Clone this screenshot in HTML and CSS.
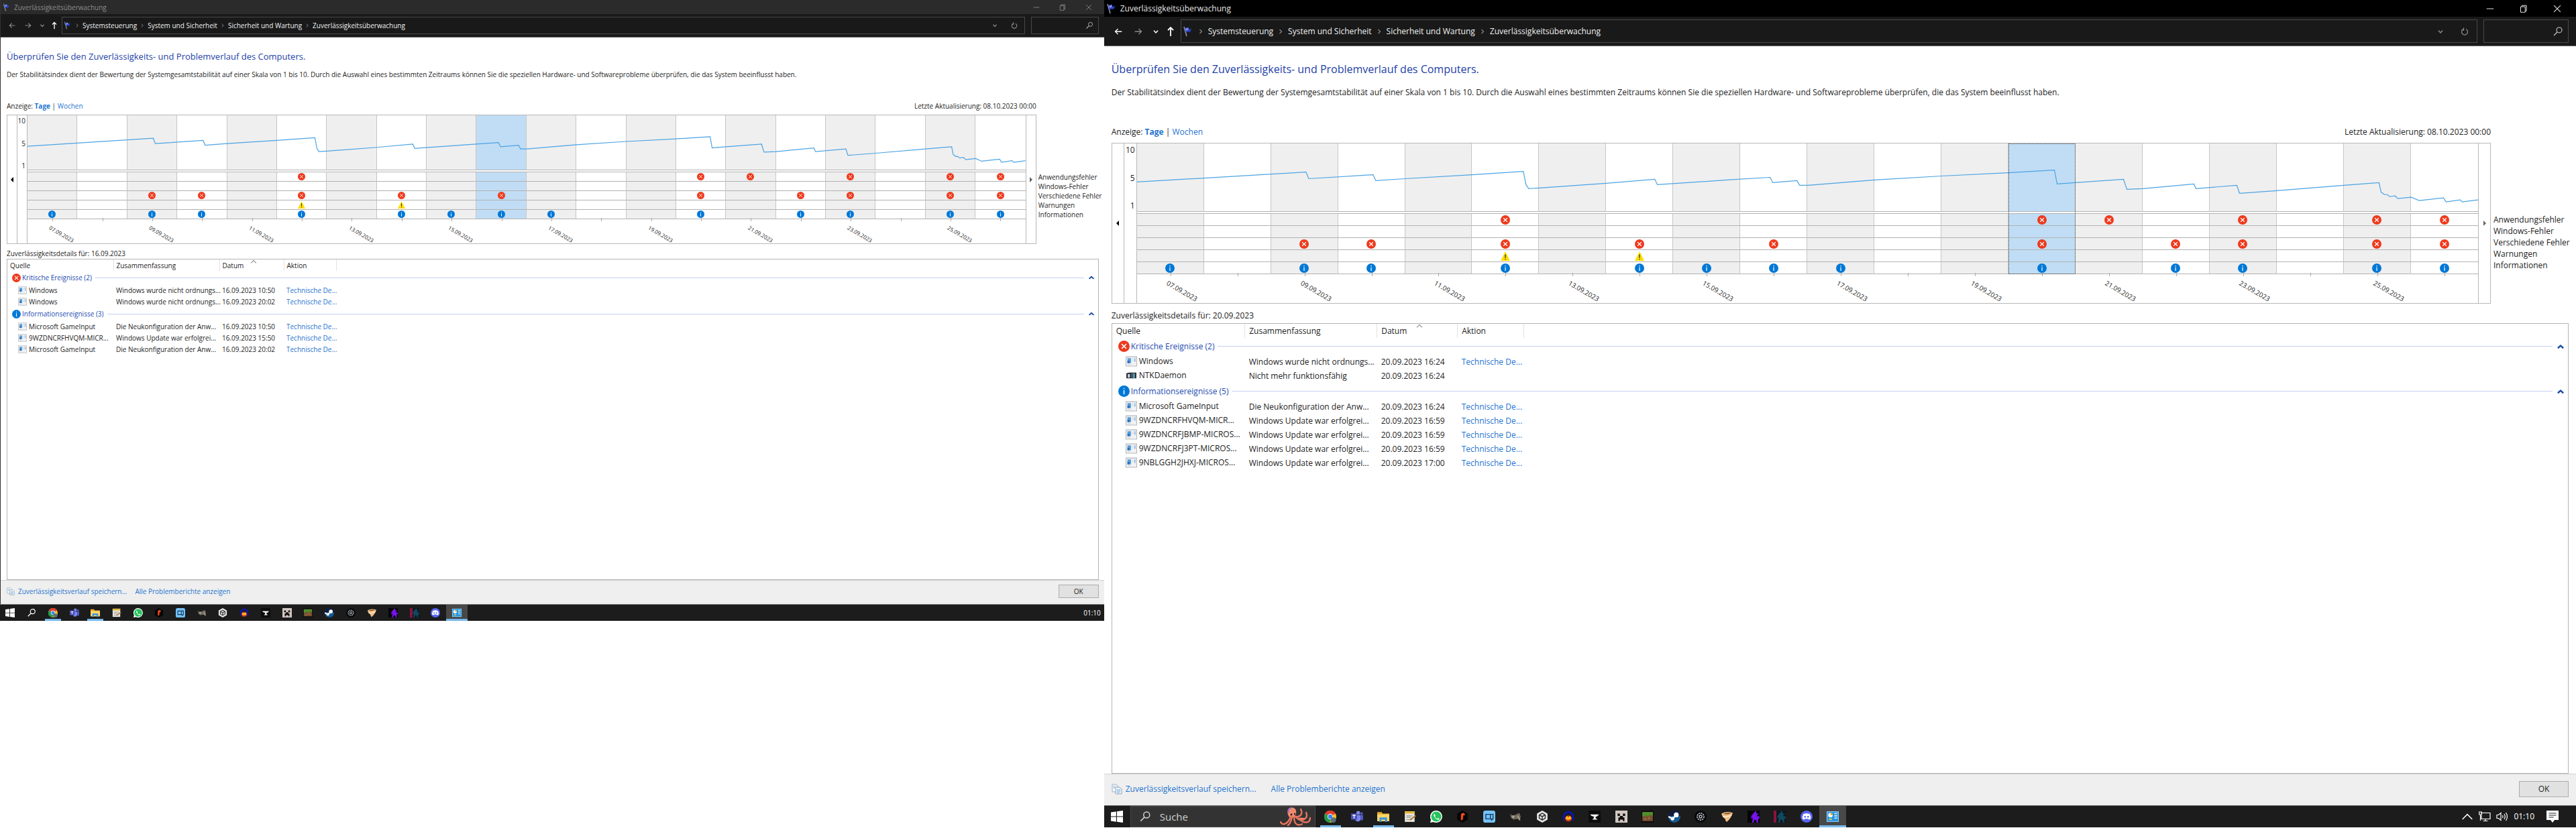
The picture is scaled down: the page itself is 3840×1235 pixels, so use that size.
FILE: index.html
```html
<!DOCTYPE html>
<html lang="de">
<head>
<meta charset="utf-8">
<meta name="viewport" content="width=device-width, initial-scale=1">
<title>Zuverlässigkeitsüberwachung</title>
<link rel="stylesheet" href="styles.css">
</head>
<body>
<svg class="sprite" aria-hidden="true">
  <symbol id="flag" viewBox="0 0 16 16"><path d="M2 1l4 14" stroke="#9aa0a8" stroke-width="1.4"/><path d="M3 2q3 2 5-1l1 4 5-1q-3 2-3 5-3-2-6 1z" fill="#2c43c8"/><path d="M4 3q3 1 4-1l1 3-4 2z" fill="#7f93f2"/></symbol>
  <symbol id="back" viewBox="0 0 16 16"><path d="M15 8H2M7.500 2.500L2 8l5.500 5.500" fill="none" stroke="currentColor" stroke-width="1.800"/></symbol>
  <symbol id="fwd" viewBox="0 0 16 16"><path d="M1 8h13M8.500 2.500L14 8l-5.500 5.500" fill="none" stroke="currentColor" stroke-width="1.800"/></symbol>
  <symbol id="up" viewBox="0 0 16 16"><path d="M8 15V2M4 6l4-4 4 4" fill="none" stroke="currentColor" stroke-width="1.800"/></symbol>
  <symbol id="down" viewBox="0 0 16 16"><path d="M4 6L8 10.500 12 6" fill="none" stroke="currentColor" stroke-width="2"/></symbol>
  <symbol id="sep" viewBox="0 0 16 16"><path d="M6 4L10 8 6 12" fill="none" stroke="currentColor" stroke-width="1.500"/></symbol>
  <symbol id="reload" viewBox="0 0 16 16"><path d="M11 3.500A6 6 0 1 1 5 3.500M6 .5v4.500H2" fill="none" stroke="currentColor" stroke-width="1.700"/></symbol>
  <symbol id="lens" viewBox="0 0 16 16"><circle cx="10" cy="5.800" r="4" fill="none" stroke="currentColor" stroke-width="1.300"/><path d="M7.300 8.600L2 14" stroke="currentColor" stroke-width="1.500"/></symbol>
  <symbol id="min" viewBox="0 0 16 16"><path d="M1 8h14" stroke="currentColor" stroke-width="1.300"/></symbol>
  <symbol id="max" viewBox="0 0 16 16"><path d="M2 4h9v11H2zM4.500 4V1.500h9v11H11" fill="none" stroke="currentColor" stroke-width="1.300"/></symbol>
  <symbol id="close" viewBox="0 0 16 16"><path d="M1.500 1.500l13 13M14.500 1.500l-13 13" stroke="currentColor" stroke-width="1.400"/></symbol>
  <symbol id="err" viewBox="0 0 16 16"><circle cx="8" cy="8" r="8" fill="#ee3a1d"/><path d="M4.800 4.800l6.400 6.400M11.200 4.800l-6.400 6.400" stroke="#fff" stroke-width="1.400"/></symbol>
  <symbol id="info" viewBox="0 0 16 16"><circle cx="8" cy="8" r="8" fill="#0078d7"/><path d="M8 6.500V12.500M8 3.500V5" stroke="#fff" stroke-width="1.400"/></symbol>
  <symbol id="warn" viewBox="0 0 16 16"><path d="M8 0l8 16H0z" fill="#ffde00"/><path d="M8 5v6M8 12.500v1.500" stroke="#222" stroke-width="1.400"/></symbol>
  <symbol id="app" viewBox="0 0 16 14"><path d="M.5.500h15v13H.5z" fill="#f1f2f4" stroke="#b4b8bd"/><path d="M2.500 2.500h5v7h-5z" fill="#5a9ed8"/><path d="M2.500 6h3v3.500h-3z" fill="#2f6fb4"/><path d="M12 2.500h2v5h-2z" fill="#9cc3e6"/><path d="M9 4h2M9 6h2M3 11.500h4" stroke="#ccd0d6"/></symbol>
  <symbol id="ntk" viewBox="0 0 16 14"><path d="M1 4l4-1v8l-4 0zM5 3h10v8H5z" fill="#20282e"/><path d="M3 5h3v5H3z" fill="#cfd6da"/><path d="M8 4h1v6H8zM10 4h3v7h-3z" fill="#5f98ad"/></symbol>
  <symbol id="fold" viewBox="0 0 16 16"><path d="M2.500 11L8 6l5.500 5" fill="none" stroke="#1a4aa8" stroke-width="3.200"/></symbol>
  <symbol id="copy" viewBox="0 0 16 16"><path d="M1 1h6l2 2v9H1z" fill="#f6f9fc" stroke="#9fb0c0"/><path d="M6 5h6l3 3v7H6z" fill="#e8f2fb" stroke="#8fa5ba"/><path d="M8 9h5M8 11h5M8 13h4M2.500 4h3M2.500 6h3" stroke="#7fb0dc"/></symbol>
  <symbol id="trend" viewBox="0 0 2000 103" preserveAspectRatio="none"><polyline vector-effect="non-scaling-stroke" fill="none" stroke="#4ba3e3" stroke-width="1.200" points="0,58 252,43 256,53 352,47 356,56 400,53 500,47 576,42 580,62 584,68 600,67 700,60 772,54 776,62 880,55 944,51 948,59 984,56 988,63 1001,63 1100,55 1200,49 1300,44 1368,40 1372,61 1400,59 1471,54 1476,69 1500,68 1576,61 1579,68 1640,63 1644,75 1700,71 1800,63 1852,59 1855,73 1860,77 1864,77 1868,80 1876,79 1880,83 1900,81 1912,86 1948,82 1952,88 1973,85 1976,88 2000,85"/></symbol>

  <symbol id="win" viewBox="0 0 16 16"><path d="M0 2.300L7 1.300V7.600H0zM8 1.200L16 0v7.600H8zM0 8.500h7v6.300l-7-1zM8 8.500h8V16l-8-1.100z" fill="#fff"/></symbol>
  <symbol id="chrome" viewBox="0 0 16 16"><circle cx="8" cy="8" r="8" fill="#fbc116"/><path d="M1 4A8 8 0 0 1 15 4L8 8z" fill="#e33b2e"/><path d="M1 4a8 8 0 0 0 6 12l4-7-3-1z" fill="#229a4b"/><circle cx="8" cy="8" r="3.700" fill="#fff"/><circle cx="8" cy="8" r="2.900" fill="#3f82f0"/><circle cx="12" cy="12.500" r="3.500" fill="#5b6f7e"/></symbol>
  <symbol id="teams" viewBox="0 0 16 16"><circle cx="9.500" cy="3" r="2.500" fill="#7b83eb"/><circle cx="14" cy="4" r="1.700" fill="#5059c9"/><path d="M6 6h7v5a4 4 0 0 1-7 2z" fill="#7b83eb"/><path d="M13 6h3v5a2.500 2.500 0 0 1-3 2z" fill="#5059c9"/><path d="M0 4h8v8H0z" fill="#4b53bc"/><path d="M2 6.200h4M4 6.200V10.500" stroke="#fff" stroke-width="1.200"/></symbol>
  <symbol id="folder" viewBox="0 0 16 16"><path d="M0 2h6l1 2h9v10H0z" fill="#e9a829"/><path d="M0 5h16v9H0z" fill="#ffd766"/><path d="M3 9h10v6h-2.500v-3h-5v3H3z" fill="#3b95dd"/></symbol>
  <symbol id="notes" viewBox="0 0 16 16"><path d="M1 1h13v14H1z" fill="#e8e6df"/><path d="M1 1h13v3H1z" fill="#e3b93a"/><path d="M3 7h8M3 9h6M3 12h8" stroke="#9a9a98"/><path d="M7 12l8-6 1 1.500-8 5.500z" fill="#a87432"/></symbol>
  <symbol id="whatsapp" viewBox="0 0 16 16"><path d="M8 0a8 8 0 1 1-4 15L0 16l1-4A8 8 0 0 1 8 0z" fill="#fff"/><circle cx="8" cy="8" r="6.700" fill="#25c45c"/><path d="M5.500 4.200c-1.600 1-.6 4 1.400 6s5 2.700 5.300.8l-2-1.200-1 1c-1.600-.6-2.500-1.700-3-3l.9-1z" fill="#fff"/></symbol>
  <symbol id="hexf" viewBox="0 0 16 16"><path d="M8 0l7 4v8l-7 4-7-4V4z" fill="#050505"/><path d="M6 13V6q0-3 3.500-3Q12 4 11 6.500 9 5.500 9 8l-.500 4z" fill="#f04a18"/></symbol>
  <symbol id="dupe" viewBox="0 0 16 16"><rect width="16" height="16" rx="3" fill="#74c2f8"/><path d="M3.500 5h6v6h-6zM8 5h5v6l-2 1.500V11H8" fill="none" stroke="#173a5c" stroke-width="1.200"/></symbol>
  <symbol id="gimp" viewBox="0 0 16 16"><path d="M1 4l3 3 5-2 4-2 2 5-1 4-4-1-5 1-3-3z" fill="#716a5d"/><path d="M4 6l3 1-1 3-3-1z" fill="#a8a59d"/><path d="M11 7l3 6" stroke="#b5a58e" stroke-width="1.400"/></symbol>
  <symbol id="cube" viewBox="0 0 16 16"><path d="M8 0l7 4v8l-7 4-7-4V4z" fill="#e7e7e7"/><path d="M8 3.500L12 6v4l-4 2.500L4 10V6zM8 8v4M8 8L4.500 6M8 8l3.500-2" fill="none" stroke="#333" stroke-width="1.300"/></symbol>
  <symbol id="audacity" viewBox="0 0 16 16"><path d="M2 13V8a6 6 0 0 1 12 0v5" fill="none" stroke="#0a16c8" stroke-width="2.200"/><ellipse cx="8" cy="10.500" rx="4.500" ry="4" fill="#e0380f"/><path d="M4 10l2-3 2 2 2-2 2 3-2 2H6z" fill="#ffc21c"/></symbol>
  <symbol id="anvil" viewBox="0 0 16 16"><path d="M0 0h16v16H0z" fill="#0c0c0c"/><path d="M2 5h12l-3 3H9.500v2L12 12H5l2-2V8L4 7z" fill="#f4f4f4"/></symbol>
  <symbol id="creeper" viewBox="0 0 16 16"><path d="M0 0h16v16H0z" fill="#d3c7c2"/><path d="M3 4h3v3H3zM10 4h3v3h-3zM6 7h4v2h2v5h-2v-2H6v2H4V9h2z" fill="#0d0d0d"/></symbol>
  <symbol id="grass" viewBox="0 0 16 16"><path d="M0 0h16v16H0z" fill="#0b0b0b"/><path d="M1 2h14v12H1z" fill="#7a5030"/><path d="M1 2h14v4l-2 1-2-2-2 3-3-2-2 2-3-1z" fill="#4f8f2c"/><path d="M4 10h2v2H4zM9 9h2v2H9z" fill="#a2764c"/></symbol>
  <symbol id="steam" viewBox="0 0 16 16"><circle cx="8" cy="8" r="8" fill="#155a94"/><path d="M0 7a8 8 0 0 1 16 0z" fill="#101b40"/><circle cx="10.500" cy="5.700" r="3.200" fill="#fff"/><circle cx="5.500" cy="10.700" r="2.300" fill="#fff"/><path d="M0 8l6 3 3-4" fill="none" stroke="#fff" stroke-width="2"/></symbol>
  <symbol id="bloom" viewBox="0 0 16 16"><circle cx="8" cy="8" r="8" fill="#06070a"/><circle cx="8" cy="8" r="4.500" fill="none" stroke="#bfc3c8" stroke-width="1.500" stroke-dasharray="2 1"/><circle cx="8" cy="8" r="1.800" fill="none" stroke="#bfc3c8" stroke-width="1.200"/></symbol>
  <symbol id="cone" viewBox="0 0 16 16"><path d="M1 4q6-4 15-1-2 7-8 12-2-1-2-4-4-2-5-7z" fill="#efc089"/><path d="M3 4.500q6-2.500 11-1-5 2-11 1z" fill="#7b4a22"/><path d="M3 8q7 1 11-2" stroke="#fff0d8" stroke-width="1.300" fill="none"/></symbol>
  <symbol id="bird" viewBox="0 0 16 16"><path d="M11 0L5 7v4l2-2-1 7h2l1-4 3 1v3h2v-4l2-3V8l-4-1 3-3-3 0z"/></symbol>
  <symbol id="discord" viewBox="0 0 16 16"><circle cx="8" cy="8" r="8" fill="#5865f2"/><path d="M4 4.500q4-1.500 8 0 2 3 1.500 6.500l-2.500 1-1-1.200H6L5 12l-2.500-1Q2 7.500 4 4.500z" fill="#fff"/><circle cx="6" cy="8.200" r="1.200" fill="#5865f2"/><circle cx="10" cy="8.200" r="1.200" fill="#5865f2"/></symbol>
  <symbol id="panel" viewBox="0 0 16 16"><path d="M0 1h16v14H0z" fill="#8fd3fb"/><path d="M1 2h14v12H1z" fill="#1f93e0"/><circle cx="5" cy="6" r="3" fill="#fff"/><path d="M5 6V3a3 3 0 0 1 3 3z" fill="#f6a51b"/><path d="M10 4h4M10 7h4M10 10h4" stroke="#d9f0ff" stroke-width="1.400"/><path d="M3 11.500h4" stroke="#ffd24a" stroke-width="1.600"/></symbol>
  <symbol id="octopus" viewBox="0 0 46 28"><path d="M14 15Q8 6 15 1q7-2 9 4 1 5-2 8 6 1 9 6 5 1 7-3" fill="#f08a6c"/><path d="M16 14q-3 9-9 11-4 1-6-3M18 15q-2 9-6 12M21 15q0 9 5 11 5 1 7-1M23 14q7 8 13 4 6-3 3-10M22 14q8 1 10-4 1-4-1-7M28 17q6 7 14 5 3-2 3-6" fill="none" stroke="#e6745f" stroke-width="2.400" stroke-linecap="round"/><path d="M13 8Q11 2 17 1" stroke="#9a6fd0" stroke-width="2" fill="none"/><circle cx="17" cy="11" r="1.400" fill="#2d1830"/><circle cx="22" cy="10" r="1.200" fill="#2d1830"/></symbol>
  <symbol id="chev" viewBox="0 0 16 16"><path d="M1.500 11.500L8 5l6.500 6.500" fill="none" stroke="currentColor" stroke-width="1.300"/></symbol>
  <symbol id="net" viewBox="0 0 18 16"><path d="M3 2.500h14v9H4V6M10 12v2.500M6.500 14.500h7M.8 1h3.500v4H.8zM2.500 5v9" fill="none" stroke="currentColor" stroke-width="1.200"/></symbol>
  <symbol id="sound" viewBox="0 0 18 16"><path d="M1 5.500h2.500L7 2.500v11L3.500 10.500H1zM9.500 6q1 2 0 4M12 4q2.500 4 0 8M14.500 2q4 6 0 12" fill="none" stroke="currentColor" stroke-width="1.200"/></symbol>
  <symbol id="notif" viewBox="0 0 18 18"><path d="M0 0h18v14h-6l-3 4-3-4H0z" fill="#fff"/><path d="M3.500 4h11M3.500 7h11M3.500 10h7" stroke="#222" stroke-width="1.200"/></symbol>
</svg>

<main class="screens">
<section class="screen small">
  <header class="title"><svg class="ic"><use href="#flag"/></svg><h1>Zuverlässigkeitsüberwachung</h1>
    <div class="winbtns"><button aria-label="Minimieren"><svg><use href="#min"/></svg></button><button aria-label="Wiederherstellen"><svg><use href="#max"/></svg></button><button aria-label="Schließen"><svg><use href="#close"/></svg></button></div></header>
  <nav class="nav">
    <div class="arrows"><button aria-label="Zurück"><svg><use href="#back"/></svg></button><button aria-label="Vorwärts" class="off"><svg><use href="#fwd"/></svg></button><button aria-label="Verlauf" class="thin"><svg><use href="#down"/></svg></button><button aria-label="Nach oben" class="lit"><svg><use href="#up"/></svg></button></div>
    <div class="address"><svg class="ic"><use href="#flag"/></svg><svg class="sep"><use href="#sep"/></svg><a href="#">Systemsteuerung</a><svg class="sep"><use href="#sep"/></svg><a href="#">System und Sicherheit</a><svg class="sep"><use href="#sep"/></svg><a href="#">Sicherheit und Wartung</a><svg class="sep"><use href="#sep"/></svg><a href="#">Zuverlässigkeitsüberwachung</a><span class="tools"><button aria-label="Adressen"><svg><use href="#down"/></svg></button><button aria-label="Aktualisieren"><svg><use href="#reload"/></svg></button></span></div>
    <label class="search"><input type="text" aria-label="Suchen"><svg><use href="#lens"/></svg></label>
  </nav>
  <div class="content">
    <h2>Überprüfen Sie den Zuverlässigkeits- und Problemverlauf des Computers.</h2>
    <p class="intro">Der Stabilitätsindex dient der Bewertung der Systemgesamtstabilität auf einer Skala von 1 bis 10. Durch die Auswahl eines bestimmten Zeitraums können Sie die speziellen Hardware- und Softwareprobleme überprüfen, die das System beeinflusst haben.</p>
    <div class="report">
      <div class="view"><span>Anzeige: <a href="#"><b>Tage</b></a> | <a href="#">Wochen</a></span><span>Letzte Aktualisierung: 08.10.2023 00:00</span></div>
      <div class="chart">
        <button class="prev" aria-label="Zurückblättern"></button>
        <div class="axis"><span>10</span><span>5</span><span>1</span></div>
        <div class="plot">
          <table class="days sel16">
            <tbody>
            <tr class="graph">
              <td><td><td><td><td>
              <td><td><td><td><td>
              <td><td><td><td><td>
              <td><td><td><td><td>
            <tr class="gap"><td colspan="20">
            <tr class="ev">
              <td><td><td><td><td>
              <td><svg><use href="#err"/></svg><td><td><td><td>
              <td><td><td><td><svg><use href="#err"/></svg><td><svg><use href="#err"/></svg>
              <td><td><svg><use href="#err"/></svg><td><td><svg><use href="#err"/></svg><td><svg><use href="#err"/></svg>
            <tr class="ev">
              <td><td><td><td><td>
              <td><td><td><td><td>
              <td><td><td><td><td>
              <td><td><td><td><td>
            <tr class="ev">
              <td><td><td><svg><use href="#err"/></svg><td><svg><use href="#err"/></svg><td>
              <td><svg><use href="#err"/></svg><td><td><svg><use href="#err"/></svg><td><td><svg><use href="#err"/></svg>
              <td><td><td><td><svg><use href="#err"/></svg><td>
              <td><svg><use href="#err"/></svg><td><svg><use href="#err"/></svg><td><td><svg><use href="#err"/></svg><td><svg><use href="#err"/></svg>
            <tr class="ev">
              <td><td><td><td><td>
              <td><svg><use href="#warn"/></svg><td><td><svg><use href="#warn"/></svg><td><td>
              <td><td><td><td><td>
              <td><td><td><td><td>
            <tr class="ev">
              <td><svg><use href="#info"/></svg><td><td><svg><use href="#info"/></svg><td><svg><use href="#info"/></svg><td>
              <td><svg><use href="#info"/></svg><td><td><svg><use href="#info"/></svg><td><svg><use href="#info"/></svg><td><svg><use href="#info"/></svg>
              <td><svg><use href="#info"/></svg><td><td><td><svg><use href="#info"/></svg><td>
              <td><svg><use href="#info"/></svg><td><svg><use href="#info"/></svg><td><td><svg><use href="#info"/></svg><td><svg><use href="#info"/></svg>
            <tr class="dates"><td><span>07.09.2023</span><td><td><span>09.09.2023</span><td><td><span>11.09.2023</span><td><td><span>13.09.2023</span><td><td><span>15.09.2023</span><td><td><span>17.09.2023</span><td><td><span>19.09.2023</span><td><td><span>21.09.2023</span><td><td><span>23.09.2023</span><td><td><span>25.09.2023</span><td>
            </tbody>
          </table>
          <svg class="line"><use href="#trend"/></svg>
        </div>
        <button class="next" aria-label="Weiterblättern"></button>
      </div>
      <ul class="legend"><li>Anwendungsfehler</li><li>Windows-Fehler</li><li>Verschiedene Fehler</li><li>Warnungen</li><li>Informationen</li></ul>
    </div>
    <h3>Zuverlässigkeitsdetails für: 16.09.2023</h3>
    <div class="list">
      <table class="details">
        <colgroup><col class="c1"><col class="c2"><col class="c3"><col class="c4"><col></colgroup>
        <thead><tr><th>Quelle</th><th>Zusammenfassung</th><th class="sorted">Datum</th><th>Aktion</th><th></th></tr></thead>
        <tbody>
          <tr class="group"><td colspan="5"><div><svg class="big"><use href="#err"/></svg>Kritische Ereignisse (2)<hr><svg class="fold"><use href="#fold"/></svg></div></td></tr>
          <tr><td><svg class="app"><use href="#app"/></svg>Windows</td><td>Windows wurde nicht ordnungs...</td><td>16.09.2023 10:50</td><td><a href="#">Technische De...</a></td></tr>
          <tr><td><svg class="app"><use href="#app"/></svg>Windows</td><td>Windows wurde nicht ordnungs...</td><td>16.09.2023 20:02</td><td><a href="#">Technische De...</a></td></tr>
          <tr class="group"><td colspan="5"><div><svg class="big"><use href="#info"/></svg>Informationsereignisse (3)<hr><svg class="fold"><use href="#fold"/></svg></div></td></tr>
          <tr><td><svg class="app"><use href="#app"/></svg>Microsoft GameInput</td><td>Die Neukonfiguration der Anw...</td><td>16.09.2023 10:50</td><td><a href="#">Technische De...</a></td></tr>
          <tr><td><svg class="app"><use href="#app"/></svg>9WZDNCRFHVQM-MICR...</td><td>Windows Update war erfolgrei...</td><td>16.09.2023 15:50</td><td><a href="#">Technische De...</a></td></tr>
          <tr><td><svg class="app"><use href="#app"/></svg>Microsoft GameInput</td><td>Die Neukonfiguration der Anw...</td><td>16.09.2023 20:02</td><td><a href="#">Technische De...</a></td></tr>
        </tbody>
      </table>
    </div>
  </div>
  <footer class="foot"><svg><use href="#copy"/></svg><a href="#">Zuverlässigkeitsverlauf speichern...</a><a href="#">Alle Problemberichte anzeigen</a><button>OK</button></footer>
  <div class="taskbar">
    <button class="start" aria-label="Start"><svg><use href="#win"/></svg></button>
    <button class="find" aria-label="Suche"><svg><use href="#lens"/></svg></button>
    <div class="apps">
      <button class="open" aria-label="Chrome"><svg><use href="#chrome"/></svg></button><button aria-label="Teams"><svg><use href="#teams"/></svg></button><button class="open" aria-label="Explorer"><svg><use href="#folder"/></svg></button><button aria-label="Notizen"><svg><use href="#notes"/></svg></button><button aria-label="WhatsApp"><svg><use href="#whatsapp"/></svg></button><button aria-label="Launcher"><svg><use href="#hexf"/></svg></button><button aria-label="Spiegeln"><svg><use href="#dupe"/></svg></button><button aria-label="GIMP"><svg><use href="#gimp"/></svg></button><button aria-label="Unity"><svg><use href="#cube"/></svg></button><button aria-label="Audacity"><svg><use href="#audacity"/></svg></button><button aria-label="Amboss"><svg><use href="#anvil"/></svg></button><button aria-label="Creeper"><svg><use href="#creeper"/></svg></button><button aria-label="Minecraft"><svg><use href="#grass"/></svg></button><button aria-label="Steam"><svg><use href="#steam"/></svg></button><button aria-label="Blüte"><svg><use href="#bloom"/></svg></button><button aria-label="Tornado"><svg><use href="#cone"/></svg></button><button class="violet" aria-label="Violett"><svg><use href="#bird"/></svg></button><button class="teal" aria-label="Petrol"><svg><use href="#bird"/></svg></button><button aria-label="Discord"><svg><use href="#discord"/></svg></button><button class="open active" aria-label="Systemsteuerung"><svg><use href="#panel"/></svg></button>
    </div>
    <div class="tray"><time>01:10</time></div>
  </div>
</section>

<section class="screen large">
  <header class="title"><svg class="ic"><use href="#flag"/></svg><h1>Zuverlässigkeitsüberwachung</h1>
    <div class="winbtns"><button aria-label="Minimieren"><svg><use href="#min"/></svg></button><button aria-label="Wiederherstellen"><svg><use href="#max"/></svg></button><button aria-label="Schließen"><svg><use href="#close"/></svg></button></div></header>
  <nav class="nav">
    <div class="arrows"><button aria-label="Zurück"><svg><use href="#back"/></svg></button><button aria-label="Vorwärts" class="off"><svg><use href="#fwd"/></svg></button><button aria-label="Verlauf" class="thin"><svg><use href="#down"/></svg></button><button aria-label="Nach oben" class="lit"><svg><use href="#up"/></svg></button></div>
    <div class="address"><svg class="ic"><use href="#flag"/></svg><svg class="sep"><use href="#sep"/></svg><a href="#">Systemsteuerung</a><svg class="sep"><use href="#sep"/></svg><a href="#">System und Sicherheit</a><svg class="sep"><use href="#sep"/></svg><a href="#">Sicherheit und Wartung</a><svg class="sep"><use href="#sep"/></svg><a href="#">Zuverlässigkeitsüberwachung</a><span class="tools"><button aria-label="Adressen"><svg><use href="#down"/></svg></button><button aria-label="Aktualisieren"><svg><use href="#reload"/></svg></button></span></div>
    <label class="search"><input type="text" aria-label="Suchen"><svg><use href="#lens"/></svg></label>
  </nav>
  <div class="content">
    <h2>Überprüfen Sie den Zuverlässigkeits- und Problemverlauf des Computers.</h2>
    <p class="intro">Der Stabilitätsindex dient der Bewertung der Systemgesamtstabilität auf einer Skala von 1 bis 10. Durch die Auswahl eines bestimmten Zeitraums können Sie die speziellen Hardware- und Softwareprobleme überprüfen, die das System beeinflusst haben.</p>
    <div class="report">
      <div class="view"><span>Anzeige: <a href="#"><b>Tage</b></a> | <a href="#">Wochen</a></span><span>Letzte Aktualisierung: 08.10.2023 00:00</span></div>
      <div class="chart">
        <button class="prev" aria-label="Zurückblättern"></button>
        <div class="axis"><span>10</span><span>5</span><span>1</span></div>
        <div class="plot">
          <table class="days sel20">
            <tbody>
            <tr class="graph">
              <td><td><td><td><td>
              <td><td><td><td><td>
              <td><td><td><td><td>
              <td><td><td><td><td>
            <tr class="gap"><td colspan="20">
            <tr class="ev">
              <td><td><td><td><td>
              <td><svg><use href="#err"/></svg><td><td><td><td>
              <td><td><td><td><svg><use href="#err"/></svg><td><svg><use href="#err"/></svg>
              <td><td><svg><use href="#err"/></svg><td><td><svg><use href="#err"/></svg><td><svg><use href="#err"/></svg>
            <tr class="ev">
              <td><td><td><td><td>
              <td><td><td><td><td>
              <td><td><td><td><td>
              <td><td><td><td><td>
            <tr class="ev">
              <td><td><td><svg><use href="#err"/></svg><td><svg><use href="#err"/></svg><td>
              <td><svg><use href="#err"/></svg><td><td><svg><use href="#err"/></svg><td><td><svg><use href="#err"/></svg>
              <td><td><td><td><svg><use href="#err"/></svg><td>
              <td><svg><use href="#err"/></svg><td><svg><use href="#err"/></svg><td><td><svg><use href="#err"/></svg><td><svg><use href="#err"/></svg>
            <tr class="ev">
              <td><td><td><td><td>
              <td><svg><use href="#warn"/></svg><td><td><svg><use href="#warn"/></svg><td><td>
              <td><td><td><td><td>
              <td><td><td><td><td>
            <tr class="ev">
              <td><svg><use href="#info"/></svg><td><td><svg><use href="#info"/></svg><td><svg><use href="#info"/></svg><td>
              <td><svg><use href="#info"/></svg><td><td><svg><use href="#info"/></svg><td><svg><use href="#info"/></svg><td><svg><use href="#info"/></svg>
              <td><svg><use href="#info"/></svg><td><td><td><svg><use href="#info"/></svg><td>
              <td><svg><use href="#info"/></svg><td><svg><use href="#info"/></svg><td><td><svg><use href="#info"/></svg><td><svg><use href="#info"/></svg>
            <tr class="dates"><td><span>07.09.2023</span><td><td><span>09.09.2023</span><td><td><span>11.09.2023</span><td><td><span>13.09.2023</span><td><td><span>15.09.2023</span><td><td><span>17.09.2023</span><td><td><span>19.09.2023</span><td><td><span>21.09.2023</span><td><td><span>23.09.2023</span><td><td><span>25.09.2023</span><td>
            </tbody>
          </table>
          <svg class="line"><use href="#trend"/></svg>
          <div class="focus"></div>
        </div>
        <button class="next" aria-label="Weiterblättern"></button>
      </div>
      <ul class="legend"><li>Anwendungsfehler</li><li>Windows-Fehler</li><li>Verschiedene Fehler</li><li>Warnungen</li><li>Informationen</li></ul>
    </div>
    <h3>Zuverlässigkeitsdetails für: 20.09.2023</h3>
    <div class="list">
      <table class="details">
        <colgroup><col class="c1"><col class="c2"><col class="c3"><col class="c4"><col></colgroup>
        <thead><tr><th>Quelle</th><th>Zusammenfassung</th><th class="sorted">Datum</th><th>Aktion</th><th></th></tr></thead>
        <tbody>
          <tr class="group"><td colspan="5"><div><svg class="big"><use href="#err"/></svg>Kritische Ereignisse (2)<hr><svg class="fold"><use href="#fold"/></svg></div></td></tr>
          <tr><td><svg class="app"><use href="#app"/></svg>Windows</td><td>Windows wurde nicht ordnungs...</td><td>20.09.2023 16:24</td><td><a href="#">Technische De...</a></td></tr>
          <tr><td><svg class="app"><use href="#ntk"/></svg>NTKDaemon</td><td>Nicht mehr funktionsfähig</td><td>20.09.2023 16:24</td><td></td></tr>
          <tr class="group"><td colspan="5"><div><svg class="big"><use href="#info"/></svg>Informationsereignisse (5)<hr><svg class="fold"><use href="#fold"/></svg></div></td></tr>
          <tr><td><svg class="app"><use href="#app"/></svg>Microsoft GameInput</td><td>Die Neukonfiguration der Anw...</td><td>20.09.2023 16:24</td><td><a href="#">Technische De...</a></td></tr>
          <tr><td><svg class="app"><use href="#app"/></svg>9WZDNCRFHVQM-MICR...</td><td>Windows Update war erfolgrei...</td><td>20.09.2023 16:59</td><td><a href="#">Technische De...</a></td></tr>
          <tr><td><svg class="app"><use href="#app"/></svg>9WZDNCRFJBMP-MICROS...</td><td>Windows Update war erfolgrei...</td><td>20.09.2023 16:59</td><td><a href="#">Technische De...</a></td></tr>
          <tr><td><svg class="app"><use href="#app"/></svg>9WZDNCRFJ3PT-MICROS...</td><td>Windows Update war erfolgrei...</td><td>20.09.2023 16:59</td><td><a href="#">Technische De...</a></td></tr>
          <tr><td><svg class="app"><use href="#app"/></svg>9NBLGGH2JHXJ-MICROS...</td><td>Windows Update war erfolgrei...</td><td>20.09.2023 17:00</td><td><a href="#">Technische De...</a></td></tr>
        </tbody>
      </table>
    </div>
  </div>
  <footer class="foot"><svg><use href="#copy"/></svg><a href="#">Zuverlässigkeitsverlauf speichern...</a><a href="#">Alle Problemberichte anzeigen</a><button>OK</button></footer>
  <div class="taskbar">
    <button class="start" aria-label="Start"><svg><use href="#win"/></svg></button>
    <button class="find wide"><svg><use href="#lens"/></svg><span>Suche</span><svg class="octo"><use href="#octopus"/></svg></button>
    <div class="apps">
      <button class="open" aria-label="Chrome"><svg><use href="#chrome"/></svg></button><button aria-label="Teams"><svg><use href="#teams"/></svg></button><button class="open" aria-label="Explorer"><svg><use href="#folder"/></svg></button><button aria-label="Notizen"><svg><use href="#notes"/></svg></button><button aria-label="WhatsApp"><svg><use href="#whatsapp"/></svg></button><button aria-label="Launcher"><svg><use href="#hexf"/></svg></button><button aria-label="Spiegeln"><svg><use href="#dupe"/></svg></button><button aria-label="GIMP"><svg><use href="#gimp"/></svg></button><button aria-label="Unity"><svg><use href="#cube"/></svg></button><button aria-label="Audacity"><svg><use href="#audacity"/></svg></button><button aria-label="Amboss"><svg><use href="#anvil"/></svg></button><button aria-label="Creeper"><svg><use href="#creeper"/></svg></button><button aria-label="Minecraft"><svg><use href="#grass"/></svg></button><button aria-label="Steam"><svg><use href="#steam"/></svg></button><button aria-label="Blüte"><svg><use href="#bloom"/></svg></button><button aria-label="Tornado"><svg><use href="#cone"/></svg></button><button class="violet" aria-label="Violett"><svg><use href="#bird"/></svg></button><button class="teal" aria-label="Petrol"><svg><use href="#bird"/></svg></button><button aria-label="Discord"><svg><use href="#discord"/></svg></button><button class="open active" aria-label="Systemsteuerung"><svg><use href="#panel"/></svg></button>
    </div>
    <div class="tray"><svg><use href="#chev"/></svg><svg><use href="#net"/></svg><svg><use href="#sound"/></svg><time>01:10</time><svg class="note"><use href="#notif"/></svg></div>
  </div>
</section>
</main>
</body>
</html>
```
FILE: styles.css
```css
* { box-sizing: border-box; }
body { margin: 0; background: #fff; color: #1e1e1e; font-family: "Open Sans", "Noto Sans", sans-serif; }
h1, h2, h3, p, ul { margin: 0; padding: 0; font-weight: 400; }
ul { list-style: none; }
a { color: #1f74d0; text-decoration: none; }
button { border: 0; padding: 0; background: none; color: inherit; font: inherit; }
svg { display: block; flex: none; }
.sprite { position: absolute; width: 0; height: 0; }

.screens { display: grid; grid-template-columns: 3fr 4fr; align-items: start; }
.screen { display: flex; flex-direction: column; aspect-ratio: 16 / 9; min-width: 0; font-size: var(--text); line-height: var(--line); }

.small {
  --text: 10px; --line: 14px; --head: 13px; --icon: 12px; --glyph: 10px;
  --title: 21px; --nav: 35px; --gutter: 10px; --edge: 8px;
  --graph: 82px; --gap: 3px; --ev: 14px; --dates: 36px; --mark: 11px;
  --side: 15px; --axis: 14px; --legend: 93px; --legend-top: 86px;
  --th: 17px; --row: 17px; --group: 20px; --col1: 158px; --col2: 158px; --col3: 96px; --col4: 78px;
  --foot: 36px; --bar: 25px; --start: 30px; --find: 33px; --apps: 634px; --task: 14px;
  --search: 101px; --arrow: 24px; --crumb: 16px; --winbtn: 39px; --titlebg: #2b2b2b; --titlefg: #8c8c8c; --navfg: #8c8c8c;
}
.large {
  --text: 12px; --line: 18px; --head: 16px; --icon: 16px; --glyph: 12px;
  --title: 25px; --nav: 44px; --gutter: 11px; --edge: 11px;
  --graph: 102px; --gap: 3px; --ev: 18px; --dates: 43px; --mark: 14px;
  --side: 18px; --axis: 18px; --legend: 116px; --legend-top: 106px;
  --th: 21px; --row: 21px; --group: 25px; --col1: 198px; --col2: 197px; --col3: 120px; --col4: 99px;
  --foot: 47px; --bar: 33px; --start: 39px; --find: 276px; --apps: 788px; --task: 18px;
  --search: 127px; --arrow: 30px; --crumb: 22px; --winbtn: 50px; --titlebg: #000; --titlefg: #e6e6e6; --navfg: #fff;
}

.title { display: flex; align-items: center; height: var(--title); background: var(--titlebg); color: var(--titlefg); padding: 0 3px; }
.title h1 { font-size: var(--text); margin-left: 5px; }
.ic { width: var(--icon); height: var(--icon); }
.winbtns { display: flex; margin-left: auto; }
.winbtns button { width: var(--winbtn); display: grid; place-items: center; }
.winbtns svg { width: var(--glyph); height: var(--glyph); }

.nav { display: flex; align-items: center; height: var(--nav); background: #191919; border-bottom: 1px solid #6b6b6b; color: var(--navfg); padding-right: var(--edge); }
.arrows { display: flex; padding: 0 2px 0 5px; }
.arrows button { width: var(--arrow); display: grid; place-items: center; }
.arrows .thin { width: 18px; }
.arrows .lit { width: 18px; color: #fff; }
.arrows .off { color: #8c8c8c; }
.arrows svg { width: var(--glyph); height: var(--glyph); }
.arrows .lit svg { width: var(--icon); height: var(--icon); }
.large .arrows { padding: 0 4px 0 6px; }
.large .arrows .thin { width: 22px; }
.large .arrows .lit { width: 22px; }
.address { flex: 1; display: flex; align-items: center; border: 1px solid #484848; height: calc(var(--nav) - 9px); padding-left: 2px; color: #8c8c8c; }
.address a { color: #f0f0f0; }
.sep { width: var(--crumb); height: var(--glyph); }
.tools { display: flex; margin-left: auto; }
.tools button { width: 29px; display: grid; place-items: center; }
.large .tools button { width: 36px; }
.tools svg { width: var(--glyph); height: var(--glyph); }
.search { display: flex; align-items: center; width: var(--search); margin-left: 9px; border: 1px solid #484848; height: calc(var(--nav) - 9px); padding-right: 7px; color: #b0b0b0; }
.search input { flex: 1; min-width: 0; border: 0; background: none; color: #fff; }
.search svg { width: var(--icon); height: var(--icon); }

.content { flex: 1; display: flex; flex-direction: column; padding: 18px var(--edge) 0 var(--gutter); background: #fff; }
.large .content { padding-top: 22px; }
h2 { font-size: var(--head); line-height: 20px; color: #1e3fa8; }
.intro { margin-top: 10px; }
.large h2 { line-height: 24px; }
.large .intro { margin-top: 14px; }
.small { border-left: 1px solid #333; }
.small .content, .small .foot { padding-left: 9px; }
.report { display: grid; grid-template-columns: 1fr var(--legend); margin-top: 33px; }
.large .report { margin-top: 41px; }
.view { display: flex; justify-content: space-between; grid-column: 1; padding-bottom: 6px; }
.large .view { padding-bottom: 7px; }
.chart { grid-column: 1; display: grid; grid-template-columns: var(--side) var(--axis) 1fr var(--side); border: 1px solid #b8b8b8; }
.prev, .next { display: grid; place-items: center; }
.prev { border-right: 1px solid #b8b8b8; }
.next { border-left: 1px solid #b8b8b8; }
.prev::before, .next::before { content: ""; border: 4px solid transparent; border-right-color: #000; border-left-width: 0; }
.next::before { border-right-width: 0; border-left: 4px solid #666; }
.axis { display: flex; flex-direction: column; justify-content: space-between; align-items: flex-end; height: var(--graph); padding: 1px 2px 0 0; }
.plot { position: relative; border-left: 1px solid #b8b8b8; }
.line { position: absolute; inset: 0 0 auto 0; width: 100%; height: var(--graph); }
.days { width: 100%; border-collapse: separate; border-spacing: 0; table-layout: fixed; }
.days td { padding: 0; border-right: 1px solid #c6c6c6; border-bottom: 1px solid #b2b2b2; line-height: 0; }
.days td:last-child { border-right: 0; }
.days td:nth-child(odd) { background: #efefef; }
.graph td { height: var(--graph); }
.days .gap td { height: var(--gap); background: #fff; }
.ev td { height: var(--ev); }
.ev svg { width: var(--mark); height: var(--mark); margin: 0 auto; }
.sel16 td:nth-child(10), .sel20 td:nth-child(14) { background: #c0ddf5; }
.days .dates td { height: var(--dates); background: none; border: 0; position: relative; vertical-align: top; }
.dates td::before { content: ""; position: absolute; left: 50%; top: -2px; height: 5px; border-left: 1px solid #aaa; }
.dates span { display: block; width: 50%; white-space: nowrap; line-height: 10px; margin: 7px 0 0 45%; transform-origin: 0 50%; transform: rotate(30deg); font-size: 8px; }
.large .dates span { font-size: 10px; }
.focus { position: absolute; top: 0; bottom: var(--dates); left: 65%; width: 5%; border: 1px dotted #444; }
.legend { grid-column: 2; grid-row: 2; padding: var(--legend-top) 0 0 3px; white-space: nowrap; line-height: var(--line); }
.large .legend { padding-left: 4px; line-height: 17px; }

h3 { font-size: var(--text); line-height: var(--line); padding: 7px 0 1px; }
.large h3 { padding: 9px 0 2px; }
.list { flex: 1; border: 1px solid #b4b4b4; }
.details { width: 100%; border-collapse: collapse; table-layout: fixed; line-height: 14px; }
.c1 { width: var(--col1); }
.c2 { width: var(--col2); }
.c3 { width: var(--col3); }
.c4 { width: var(--col4); }
.details th { height: var(--th); padding: 0 0 0 4px; text-align: left; font-weight: 400; border-right: 1px solid #e2e2e2; position: relative; }
.large .details th, .large .details td { padding-left: 6px; }
.details th:last-child { border: 0; }
.sorted::before { content: ""; position: absolute; left: 50%; top: 2px; width: 5px; height: 5px; border: solid #888; border-width: 1px 0 0 1px; transform: rotate(45deg); }
.details td { height: var(--row); padding: 0 0 0 4px; white-space: nowrap; }
.details td:first-child { padding-left: 16px; }
.large .details td:first-child { padding-left: 20px; }
.details .group td:first-child { height: var(--group); padding-left: 7px; color: #1e4bb0; }
.large .details .group td:first-child { padding-left: 9px; }
.group div { display: flex; align-items: center; padding-right: 5px; gap: 2px; }
.group hr { flex: 1; border: 0; border-top: 1px solid #c3d0ee; margin: 0 4px 0 3px; }
.big { width: calc(var(--icon) + 1px); height: calc(var(--icon) + 1px); }
.fold { width: var(--glyph); height: var(--glyph); }
.app { display: inline-block; vertical-align: middle; width: calc(var(--icon) + 1px); height: var(--icon); margin: -2px 3px 0 0; }

.foot { display: flex; align-items: center; height: var(--foot); background: #efefef; border-top: 1px solid #d2d2d2; padding: 0 var(--edge) 2px var(--gutter); }
.foot svg { width: var(--icon); height: var(--icon); margin-right: 5px; }
.foot a + a { margin-left: 12px; }
.large .foot a + a { margin-left: 22px; }
.foot button { margin-left: auto; width: 60px; height: 20px; background: #e1e1e1; border: 1px solid #adadad; }
.large .foot button { width: 74px; height: 24px; }

.taskbar { display: flex; height: var(--bar); background: #1c1c1c; color: #fff; border-top: 1px solid #767676; }
.small .taskbar { margin-left: -1px; }
.taskbar button { display: grid; place-items: center; }
.start { width: var(--start); }
.taskbar svg { width: var(--task); height: var(--task); }
.taskbar .find { width: var(--find); }
.taskbar .wide { display: flex; align-items: center; gap: 13px; padding: 0 6px 0 12px; background: #333; border: 1px solid #4a4a4a; font-size: 15px; color: #d0d0d0; margin-right: 3px; }
.taskbar .octo { width: 46px; height: 28px; margin-left: auto; }
.apps { display: grid; grid-template-columns: repeat(20, 1fr); width: var(--apps); }
.apps button { position: relative; }
.open::after { content: ""; position: absolute; left: 4px; right: 4px; bottom: 0; height: 3px; background: #76b9ed; }
.active { background: #484848; }
.active::after { left: 0; right: 0; }
.violet svg { background: #050508; fill: #7a12f0; }
.teal svg { background: linear-gradient(90deg, #8e1140 25%, #0a1820 25%); fill: #10495e; }
.tray { display: flex; align-items: center; margin-left: auto; padding-right: 5px; gap: 8px; }
.large .tray { padding-right: 26px; }
.large .tray .note { margin-left: 10px; }
```
